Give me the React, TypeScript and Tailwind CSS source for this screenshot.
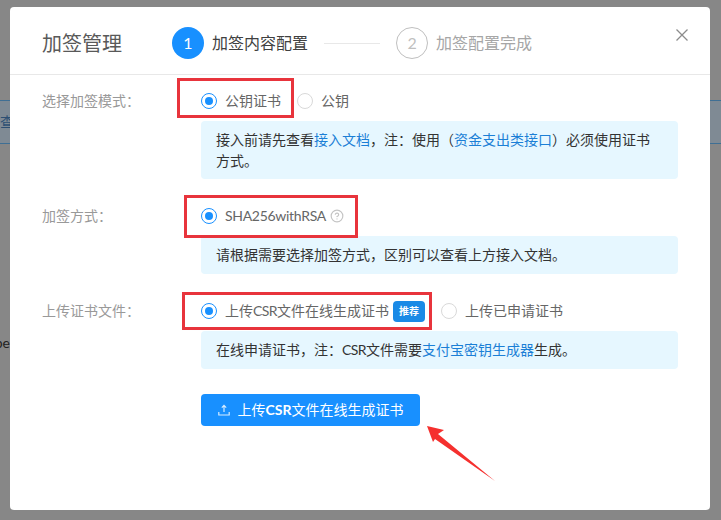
import { CircleHelp } from 'lucide-react';
import type { ReactNode } from 'react';

function Radio({ checked, children }: { checked?: boolean; children: ReactNode }) {
  return (
    <label className="flex items-center">
      <span
        className={`flex h-4 w-4 items-center justify-center rounded-full border ${
          checked ? 'border-[#1890ff]' : 'border-[#d9d9d9]'
        }`}
      >
        {checked && <span className="h-2 w-2 rounded-full bg-[#1890ff]" />}
      </span>
      <span className="ml-2 flex items-center text-[#666]">{children}</span>
    </label>
  );
}

function Row({ label, radios, tip, tipClass }: { label: string; radios: ReactNode; tip: ReactNode; tipClass: string }) {
  return (
    <div className="flex">
      <div className="w-[191px] shrink-0 pl-8 leading-[22px] text-[#999]">{label}</div>
      <div className="w-[477px]">
        <div className="flex h-[22px] items-center">{radios}</div>
        <div className={`mt-[9px] rounded bg-[#e6f7ff] px-[15px] text-[#333] ${tipClass}`}>{tip}</div>
      </div>
    </div>
  );
}

function Link({ children }: { children: ReactNode }) {
  return <a className="text-[#1b7fd6]">{children}</a>;
}

function Annotation({ className }: { className: string }) {
  return <div className={`absolute border-[3px] border-[#e8343c] ${className}`} />;
}

export default function App() {
  return (
    <div
      className="relative h-[520px] w-[721px] overflow-hidden bg-[#878787] text-sm"
      style={{ fontFamily: 'Lato, "Noto Sans CJK SC", sans-serif' }}
    >
      <div className="mt-[100px] flex h-[44px] items-center border-y border-[#3f6f94] bg-[#7f8a94] pl-0 text-[#2d4f73]">
        查
      </div>
      <div className="absolute left-0 top-[333px] flex w-[10px] justify-end overflow-hidden text-[#222]">pe</div>

      <div className="absolute left-[10px] top-[7px] h-[503px] w-[700px] rounded bg-white">
        <div className="relative flex h-[68px] items-center border-b border-[#e8e8e8] pt-[5px]">
          <div className="w-[162px] pl-8 text-xl text-[#595959]">加签管理</div>
          <div className="flex h-8 w-8 items-center justify-center rounded-full bg-[#1890ff] text-base text-white">1</div>
          <div className="ml-2 text-base text-[#404040]">加签内容配置</div>
          <div className="mx-4 h-px w-14 bg-[#e8e8e8]" />
          <div className="flex h-8 w-8 items-center justify-center rounded-full border border-[#bfbfbf] text-base text-[#bfbfbf]">2</div>
          <div className="ml-2 text-base text-[#a6a6a6]">加签配置完成</div>
          <svg className="absolute left-[665px] top-[21px] h-[14px] w-[14px]" viewBox="0 0 14 14" fill="none" stroke="#8c8c8c" strokeWidth="1.3">
            <path d="M1.5 1.5 12.5 12.5M12.5 1.5 1.5 12.5" />
          </svg>
        </div>

        <div className="flex flex-col pt-[15px]">
          <Row
            label="选择加签模式："
            radios={
              <>
                <Radio checked>公钥证书</Radio>
                <div className="ml-4">
                  <Radio>公钥</Radio>
                </div>
              </>
            }
            tipClass="py-2 leading-[21px]"
            tip={
              <>
                接入前请先查看<Link>接入文档</Link>，注：使用（<Link>资金支出类接口</Link>）必须使用证书方式。
              </>
            }
          />
          <div className="mt-[26px]">
            <Row
              label="加签方式："
              radios={
                <Radio checked>
                  <span className="tracking-[-0.3px]">SHA256withRSA</span>
                  <CircleHelp className="ml-1 h-[14px] w-[14px] text-[#c4c4c4]" />
                </Radio>
              }
              tipClass="py-2 leading-[22px]"
              tip="请根据需要选择加签方式，区别可以查看上方接入文档。"
            />
          </div>
          <div className="mt-[26px]">
            <Row
              label="上传证书文件："
              radios={
                <>
                  <Radio checked>
                    <span>
                      上传<span className="tracking-[-0.6px]">CSR</span>文件在线生成证书
                    </span>
                    <span className="ml-1 flex h-[21px] w-8 items-center justify-center rounded-sm bg-[#1a8ae6] text-[10px] font-bold text-white">
                      推荐
                    </span>
                  </Radio>
                  <div className="ml-4">
                    <Radio>上传已申请证书</Radio>
                  </div>
                </>
              }
              tipClass="py-2 leading-[22px]"
              tip={
                <>
                  在线申请证书，注：<span className="tracking-[-0.6px]">CSR</span>文件需要<Link>支付宝密钥生成器</Link>生成。
                </>
              }
            />
          </div>
          <button className="ml-[191px] mt-[25px] flex h-8 w-[219px] items-center justify-center rounded bg-[#1890ff] text-white">
            <svg className="mr-2 h-3 w-3" viewBox="0 0 12 12" fill="none" stroke="#d5ecff" strokeWidth="1.2">
              <path d="M6 8V1.5M3.8 3.6 6 1.4l2.2 2.2M.8 8v3h10.4V8" />
            </svg>
            <span>
              上传<b>CSR</b>文件在线生成证书
            </span>
          </button>
        </div>
      </div>

      <Annotation className="left-[177px] top-[78px] h-[40px] w-[117px]" />
      <Annotation className="left-[184px] top-[195px] h-[43px] w-[174px]" />
      <Annotation className="left-[182px] top-[292px] h-[38px] w-[250px]" />
      <svg className="absolute left-0 top-0 h-[520px] w-[721px]" viewBox="0 0 721 520">
        <polygon points="427,426 444,430 438,434 495,481 435,439 433,442" fill="#f5302e" />
      </svg>
    </div>
  );
}
